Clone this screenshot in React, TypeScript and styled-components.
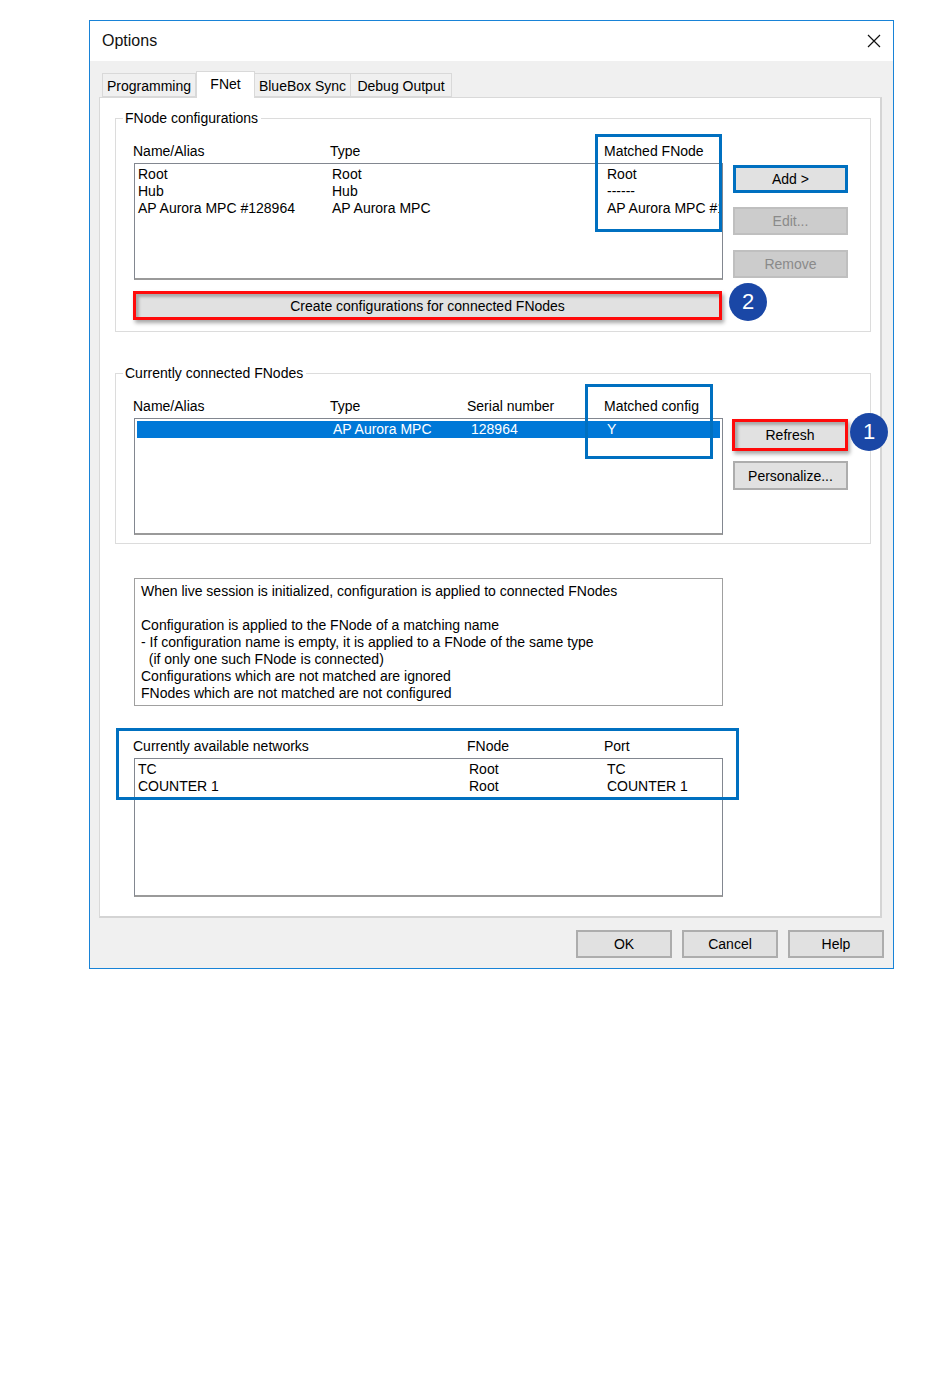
import React from 'react'
import styled, { createGlobalStyle } from 'styled-components'

const GlobalStyle = createGlobalStyle`
  html, body {
    margin: 0;
    padding: 0;
    background: #ffffff;
  }
  body {
    font-family: 'Liberation Sans', Arial, sans-serif;
    font-size: 14px;
    color: #000;
  }
`

const BLUE = '#0070c0'
const RED = '#ff0a0a'

const tabs = ['Programming', 'FNet', 'BlueBox Sync', 'Debug Output']
const tabWidths = [94, 59, 97, 102]

const configRows = [
  ['Root', 'Root', 'Root'],
  ['Hub', 'Hub', '------'],
  ['AP Aurora MPC #128964', 'AP Aurora MPC', 'AP Aurora MPC #128964']
]

const networkRows = [
  ['TC', 'Root', 'TC'],
  ['COUNTER 1', 'Root', 'COUNTER 1']
]

const infoText = `When live session is initialized, configuration is applied to connected FNodes

Configuration is applied to the FNode of a matching name
- If configuration name is empty, it is applied to a FNode of the same type
  (if only one such FNode is connected)
Configurations which are not matched are ignored
FNodes which are not matched are not configured`

export default function App() {
  return (
    <Page>
      <GlobalStyle />
      <Window>
        <TitleBar>
          <Title>Options</Title>
          <CloseIcon width='14' height='14' viewBox='0 0 14 14'>
            <path d='M1 1 L13 13 M13 1 L1 13' stroke='#111' strokeWidth='1.2' fill='none' />
          </CloseIcon>
        </TitleBar>
        <Body>
          <TabStrip>
            {tabs.map((t, i) => (
              <Tab key={t} $active={i === 1} $w={tabWidths[i]}>
                {t}
              </Tab>
            ))}
          </TabStrip>
          <Panel>
            <Group>
              <Legend>FNode configurations</Legend>
              <GroupGrid>
                <LeftColumn>
                  <ListHeader $cols='197px 274px 1fr'>
                    <span>Name/Alias</span>
                    <span>Type</span>
                    <span>Matched FNode</span>
                  </ListHeader>
                  <ListBox $h={117}>
                    {configRows.map((r, i) => (
                      <Row key={i} $cols='194px 275px 1fr'>
                        {r.map((c, j) => (
                          <Cell key={j}>{c}</Cell>
                        ))}
                      </Row>
                    ))}
                  </ListBox>
                  <CreateWrap>
                    <Button $highlight='red' $h={29}>
                      Create configurations for connected FNodes
                    </Button>
                    <Badge $left={7} $top={-8}>2</Badge>
                  </CreateWrap>
                  <AnnotationBox $left={462} $top={-9} $w={127} $h={98} />
                </LeftColumn>
                <ButtonColumn $top={22}>
                  <Button $highlight='blue' $h={28}>Add &gt;</Button>
                  <Button $disabled $h={28} $gap={14}>Edit...</Button>
                  <Button $disabled $h={28} $gap={15}>Remove</Button>
                </ButtonColumn>
              </GroupGrid>
            </Group>

            <Group $mt={33} $pb={8}>
              <Legend>Currently connected FNodes</Legend>
              <GroupGrid>
                <LeftColumn>
                  <ListHeader $cols='197px 137px 137px 1fr'>
                    <span>Name/Alias</span>
                    <span>Type</span>
                    <span>Serial number</span>
                    <span>Matched config</span>
                  </ListHeader>
                  <ListBox $h={117}>
                    <Row $cols='195px 138px 136px 1fr' $selected>
                      <Cell></Cell>
                      <Cell>AP Aurora MPC</Cell>
                      <Cell>128964</Cell>
                      <Cell>Y</Cell>
                    </Row>
                  </ListBox>
                  <AnnotationBox $left={452} $top={-14} $w={128} $h={75} />
                </LeftColumn>
                <ButtonColumn $top={21}>
                  <RefreshWrap>
                    <Button $highlight='red' $h={32}>Refresh</Button>
                    <Badge $left={2} $top={-6}>1</Badge>
                  </RefreshWrap>
                  <Button $h={29} $gap={10}>Personalize...</Button>
                </ButtonColumn>
              </GroupGrid>
            </Group>

            <InfoBox>{infoText}</InfoBox>

            <NetworkSection>
              <ListHeader $cols='334px 137px 1fr'>
                <span>Currently available networks</span>
                <span>FNode</span>
                <span>Port</span>
              </ListHeader>
              <ListBox $h={139}>
                {networkRows.map((r, i) => (
                  <Row key={i} $cols='331px 138px 1fr'>
                    {r.map((c, j) => (
                      <Cell key={j}>{c}</Cell>
                    ))}
                  </Row>
                ))}
              </ListBox>
              <AnnotationBox $left={-17} $top={-10} $w={623} $h={72} />
            </NetworkSection>
          </Panel>
          <Footer>
            <Button $h={28} $w={96}>OK</Button>
            <Button $h={28} $w={96}>Cancel</Button>
            <Button $h={28} $w={96}>Help</Button>
          </Footer>
        </Body>
      </Window>
    </Page>
  )
}

const Page = styled.div`
  padding: 20px 0 40px 89px;
`

const Window = styled.div`
  box-sizing: border-box;
  width: 805px;
  height: 949px;
  border: 1px solid #1883d7;
  display: flex;
  flex-direction: column;
  background: #f0f0f0;
`

const TitleBar = styled.div`
  height: 40px;
  background: #ffffff;
  display: flex;
  align-items: center;
  justify-content: space-between;
  padding: 0 12px 0 12px;
`

const Title = styled.div`
  font-size: 16px;
  color: #111;
`

const CloseIcon = styled.svg`
  display: block;
`

const Body = styled.div`
  flex: 1;
  padding: 10px 11px 0 9px;
  display: flex;
  flex-direction: column;
`

const TabStrip = styled.div`
  display: flex;
  align-items: flex-end;
  height: 26px;
  padding-left: 3px;
`

const Tab = styled.div<{ $active?: boolean; $w: number }>`
  box-sizing: border-box;
  width: ${(p) => p.$w}px;
  height: ${(p) => (p.$active ? 27 : 24)}px;
  margin-bottom: ${(p) => (p.$active ? -1 : 0)}px;
  position: relative;
  z-index: ${(p) => (p.$active ? 2 : 1)};
  background: ${(p) => (p.$active ? '#ffffff' : '#f0f0f0')};
  border: 1px solid #d9d9d9;
  border-bottom: ${(p) => (p.$active ? 'none' : '1px solid #d9d9d9')};
  margin-left: ${(p) => (p.$active ? 0 : -1)}px;
  display: flex;
  align-items: ${(p) => (p.$active ? 'flex-start' : 'center')};
  padding-top: ${(p) => (p.$active ? 4 : 1)}px;
  justify-content: center;
  font-size: 14px;
  white-space: nowrap;
  &:first-child {
    margin-left: 0;
  }
`

const Panel = styled.div`
  box-sizing: border-box;
  width: 783px;
  height: 821px;
  background: #ffffff;
  border: 1px solid #d9d9d9;
  border-right: 2px solid #d4d4d4;
  border-bottom: 2px solid #d4d4d4;
  padding: 12px 9px 0 15px;
  display: flex;
  flex-direction: column;
`

const Group = styled.fieldset<{ $mt?: number; $pb?: number }>`
  box-sizing: border-box;
  width: 756px;
  margin: ${(p) => p.$mt ?? 0}px 0 0 0;
  padding: 17px 22px ${(p) => p.$pb ?? 11}px 17px;
  border: 1px solid #dcdcdc;
  min-width: 0;
`

const Legend = styled.legend`
  padding: 0 3px 0 2px;
  margin-left: -10px;
  line-height: 16px;
  font-size: 14px;
`

const GroupGrid = styled.div`
  display: grid;
  grid-template-columns: 589px 115px;
  column-gap: 11px;
`

const LeftColumn = styled.div`
  position: relative;
  display: flex;
  flex-direction: column;
`

const ListHeader = styled.div<{ $cols: string }>`
  display: grid;
  grid-template-columns: ${(p) => p.$cols};
  height: 20px;
  line-height: 16px;
  white-space: nowrap;
`

const ListBox = styled.div<{ $h: number }>`
  box-sizing: border-box;
  margin-left: 1px;
  width: 589px;
  height: ${(p) => p.$h}px;
  border: 1px solid #828790;
  border-bottom: 2px solid #9a9a9a;
  padding: 2px;
  overflow: hidden;
  background: #ffffff;
`

const Row = styled.div<{ $cols: string; $selected?: boolean }>`
  display: grid;
  grid-template-columns: ${(p) => p.$cols};
  height: 17px;
  line-height: 17px;
  padding-left: 1px;
  white-space: nowrap;
  background: ${(p) => (p.$selected ? '#0078d7' : 'transparent')};
  color: ${(p) => (p.$selected ? '#ffffff' : '#000000')};
`

const Cell = styled.span`
  overflow: visible;
`

const CreateWrap = styled.div`
  position: relative;
  margin-top: 11px;
  display: flex;
`

const RefreshWrap = styled.div`
  position: relative;
  display: flex;
  margin-left: -1px;
  width: 116px;
`

const ButtonColumn = styled.div<{ $top: number }>`
  display: flex;
  flex-direction: column;
  padding-top: ${(p) => p.$top}px;
`

const Button = styled.button<{
  $highlight?: 'red' | 'blue'
  $disabled?: boolean
  $h: number
  $w?: number
  $gap?: number
}>`
  box-sizing: border-box;
  width: ${(p) => (p.$w ? `${p.$w}px` : '100%')};
  height: ${(p) => p.$h}px;
  margin: ${(p) => p.$gap ?? 0}px 0 0 0;
  font-family: 'Liberation Sans', Arial, sans-serif;
  font-size: 14px;
  padding: 0;
  white-space: nowrap;
  color: ${(p) => (p.$disabled ? '#8a8a8a' : '#000')};
  background: ${(p) => (p.$disabled ? '#cccccc' : '#e1e1e1')};
  border: ${(p) =>
    p.$highlight === 'red'
      ? `3px solid ${RED}`
      : p.$highlight === 'blue'
        ? `3px solid ${BLUE}`
        : p.$disabled
          ? '2px solid #bfbfbf'
          : '2px solid #adadad'};
  box-shadow: ${(p) =>
    p.$highlight === 'red'
      ? 'inset 3px 3px 3px rgba(0,0,0,0.25), 2px 3px 4px rgba(0,0,0,0.35)'
      : 'none'};
  cursor: default;
`

const Badge = styled.div<{ $left: number; $top: number }>`
  position: absolute;
  left: calc(100% + ${(p) => p.$left}px);
  top: ${(p) => p.$top}px;
  width: 38px;
  height: 38px;
  border-radius: 50%;
  background: #1a47a6;
  color: #ffffff;
  font-size: 22px;
  display: flex;
  align-items: center;
  justify-content: center;
  z-index: 3;
`

const AnnotationBox = styled.div<{ $left: number; $top: number; $w: number; $h: number }>`
  position: absolute;
  left: ${(p) => p.$left}px;
  top: ${(p) => p.$top}px;
  width: ${(p) => p.$w}px;
  height: ${(p) => p.$h}px;
  box-sizing: border-box;
  border: 3px solid ${BLUE};
  pointer-events: none;
  z-index: 4;
`

const InfoBox = styled.div`
  box-sizing: border-box;
  margin: 34px 0 0 19px;
  width: 589px;
  height: 128px;
  border: 1px solid #a0a0a0;
  padding: 4px 6px;
  line-height: 17px;
  white-space: pre;
`

const NetworkSection = styled.div`
  position: relative;
  margin: 32px 0 0 18px;
  display: flex;
  flex-direction: column;
  width: 590px;
`

const Footer = styled.div`
  display: flex;
  justify-content: flex-end;
  gap: 10px;
  margin-top: 12px;
  margin-right: -2px;
`
